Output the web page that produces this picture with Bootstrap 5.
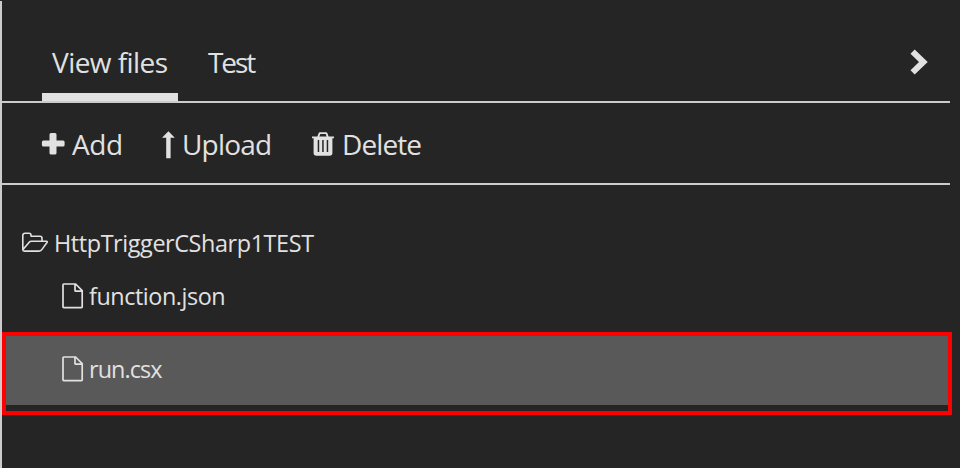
<!DOCTYPE html>
<html lang="en">
<head>
<meta charset="utf-8">
<meta name="viewport" content="width=device-width, initial-scale=1">
<title>View files</title>
<link href="https://cdn.jsdelivr.net/npm/bootstrap@5.3.0/dist/css/bootstrap.min.css" rel="stylesheet">
<style>
body{background:#252525;color:#e1e1e1;font-family:"Open Sans","Noto Sans",sans-serif;overflow:hidden}
.files-panel{height:467px;margin-top:1px;border-left:2px solid #ccc}
.panel-tabs{height:102px;margin-right:10px;padding:0 22px 0 40px;border-bottom:2px solid #ccc}
.panel-tabs .nav-link{height:77px;color:inherit;font-size:28px;line-height:38px;padding:19px 10px 0;border-bottom:0 solid transparent}
.panel-tabs .nav-link.active{border-bottom:8px solid #e1e1e1}
.tab-files{width:136px;letter-spacing:-.55px}
.tab-test{width:68px;margin-left:20px;letter-spacing:-2.1px}
.chevron{margin-top:47px}
.panel-tools{height:82px;margin-right:10px;padding-left:39px;border-bottom:2px solid #ccc}
.tool{background:none;border:0;color:inherit;font-size:28px;line-height:38px;padding:0;height:80px}
.tool svg{margin-right:7px}
.tool span{padding-top:2px}
.tool-add{width:120px}.tool-upload{width:151px}
.t-add{letter-spacing:-.4px}.t-upload{letter-spacing:-.8px}.t-delete{letter-spacing:-.9px}
.tree{font-size:23.4px;line-height:32px}
.tree-row svg{flex:none;margin-right:5px}
.tree-root{height:52px;margin-top:32px;padding-left:19px}
.tree-file{height:54px;padding-left:60px}
.t-root{letter-spacing:-.4px}.t-json{letter-spacing:-.45px}.t-run{letter-spacing:-.9px}
.outlined{width:950px;height:83px;margin-top:9px;border:4px solid #f00}
.outlined .tree-file{height:69px;padding:0 0 3px 56px;background:#595959}
</style>
<script src="https://cdn.jsdelivr.net/npm/bootstrap@5.3.0/dist/js/bootstrap.bundle.min.js"></script>
</head>
<body>
<svg class="d-none"><symbol id="page" viewBox="0 0 22 26"><path d="M1.8 1H13.6L20.2 7.6V23.8a.8.8 0 0 1-.8.8H1.8a.8.8 0 0 1-.8-.8V1.8A.8.8 0 0 1 1.8 1ZM13 1V7.4a.8.8 0 0 0 .8.8H20.2" fill="none" stroke="currentColor" stroke-width="1.7"/></symbol></svg>
<main class="files-panel">
<div class="panel-tabs d-flex align-items-end justify-content-between">
<nav class="nav flex-nowrap">
<a class="nav-link active tab-files text-nowrap" href="#">View files</a>
<a class="nav-link tab-test text-nowrap" href="#">Test</a>
</nav>
<svg class="chevron align-self-start" width="18" height="28" viewBox="0 0 18 28"><path d="M2.6 3.6 13.4 14 2.6 24.4" fill="none" stroke="currentColor" stroke-width="6" stroke-linejoin="miter"/></svg>
</div>
<div class="panel-tools d-flex">
<button class="tool tool-add d-flex align-items-center text-nowrap"><svg width="24" height="24" viewBox="0 -1 24 24"><path d="M10 .9h4a1.5 1.5 0 0 1 1.5 1.5v6.1h6.6a1.5 1.5 0 0 1 1.5 1.5v3a1.5 1.5 0 0 1-1.5 1.5h-6.6v6.6a1.5 1.5 0 0 1-1.5 1.5h-4a1.5 1.5 0 0 1-1.5-1.5v-6.6H2.4a1.5 1.5 0 0 1-1.5-1.5v-3a1.5 1.5 0 0 1 1.5-1.5h6.1V2.4A1.5 1.5 0 0 1 10 .9Z" fill="currentColor"/></svg><span class="t-add">Add</span></button>
<button class="tool tool-upload d-flex align-items-center text-nowrap"><svg width="14" height="32" viewBox="-.4 -4 14 32"><path d="M7 .2 13.4 6.8H9.2V27.2H4.8V6.8H.6Z" fill="currentColor"/></svg><span class="t-upload">Upload</span></button>
<button class="tool d-flex align-items-center text-nowrap"><svg width="23" height="28" viewBox="0 -3 23 28"><path fill="currentColor" fill-rule="evenodd" d="M7.8.3h6.4q.8 0 1.2.9l1.2 3.2H22v1.8h-1.6V21a2.8 2.8 0 0 1-2.8 2.8H4.4A2.8 2.8 0 0 1 1.6 21V6.2H0V4.4H5.4L6.6 1.2Q7 .3 7.8.3ZM8.3 2.1 7.4 4.4h7.2l-.9-2.3ZM5.7 8v12h1.5V8ZM10.2 8v12h1.5V8ZM14.7 8v12h1.5V8Z"/></svg><span class="t-delete">Delete</span></button>
</div>
<div class="tree">
<div class="tree-row tree-root d-flex align-items-center"><svg width="28" height="22" viewBox="0 0 28 22"><path d="M1.8 17.8V3.3a2 2 0 0 1 2-2H8a2 2 0 0 1 2 2v1h9a2 2 0 0 1 2 2V9.3M1.8 17.8 8 10.4q1-1.1 2.5-1.1H25.4q1.4 0 .6 1.2L21 17.4q-1.1 1.7-3 1.7H3.4q-1.6 0-1.6-1.3" fill="none" stroke="currentColor" stroke-width="1.6" stroke-linejoin="round"/></svg><span class="t-root">HttpTriggerCSharp1TEST</span></div>
<div class="tree-row tree-file d-flex align-items-center"><svg width="22" height="26"><use href="#page"/></svg><span class="t-json">function.json</span></div>
<div class="outlined"><div class="tree-row tree-file d-flex align-items-center"><svg width="22" height="26"><use href="#page"/></svg><span class="t-run">run.csx</span></div></div>
</div>
</main>
</body>
</html>
